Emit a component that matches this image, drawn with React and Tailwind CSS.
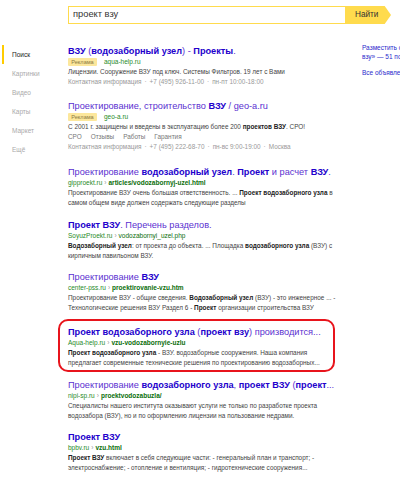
import React from 'react';

const B = ({ children }) => <b className="font-bold text-[#2200cc]">{children}</b>;
const S = ({ children }) => <b className="font-bold text-[#222]">{children}</b>;

function Title({ children }) {
    return (
        <div className="text-[9.2px] leading-[12px] text-[#5a30d0] whitespace-nowrap">
            {children}
        </div>
    );
}

function Url({ domain, path, bold = true }) {
    return (
        <div className="text-[6.5px] leading-[10px] whitespace-nowrap">
            <span className="text-[#1f8a1f]">{domain}</span>
            {path && <span className="text-[#999] px-[2px]">›</span>}
            {path && <span className={bold ? 'text-[#0a6e0a] font-bold' : 'text-[#0a6e0a]'}>{path}</span>}
        </div>
    );
}

function Snippet({ lines }) {
    return (
        <div className="text-[6.4px] leading-[10px] text-[#444]">
            {lines.map((l, i) => (
                <div key={i} className="whitespace-nowrap">{l}</div>
            ))}
        </div>
    );
}

function Ad({ domain }) {
    return (
        <div className="flex items-center h-[10px] gap-[7px] text-[6.5px]">
            <span className="h-[8px] w-[29px] flex items-center justify-center bg-[#fce79c] text-[#8b7a45] text-[5.6px] rounded-[1px]">Реклама</span>
            <span className="text-[#1f8a1f]">{domain}</span>
        </div>
    );
}

function Contact({ parts }) {
    return (
        <div className="text-[6.4px] leading-[10px] text-[#999] whitespace-nowrap">
            {parts.map((p, i) => (
                <span key={i}>
                    {i > 0 && <span className="px-[3px]">·</span>}
                    {p}
                </span>
            ))}
        </div>
    );
}

const nav = ['Поиск', 'Картинки', 'Видео', 'Карты', 'Маркет', 'Ещё'];

export default function App() {
    return (
        <div className="w-[400px] h-[478px] overflow-hidden bg-white font-['Liberation_Sans',Arial,sans-serif]">
            {/* search bar */}
            <div className="flex pt-[6px] pl-[68px]">
                <div className="w-[278px] h-[18px] border-[1.5px] border-[#ffdb4d] flex items-center pl-[4px] text-[9.3px] text-[#333]">
                    проект взу
                </div>
                <div className="w-[45px] h-[18px] bg-[#ffdb4d] [clip-path:polygon(0_0,86%_0,100%_50%,86%_100%,0_100%)] flex items-center pl-[9px] text-[8.2px] text-[#333]">
                    Найти
                </div>
            </div>

            <div className="flex mt-[21px]">
                {/* left nav */}
                <div className="w-[68px] shrink-0">
                    {nav.map((n, i) => (
                        <div key={n} className="flex items-center h-[19px]">
                            <div className={i === 0 ? 'w-[2px] h-[19px] bg-[#ffcc00] ml-[2px]' : 'w-[2px] ml-[2px]'} />
                            <span className={i === 0 ? 'ml-[8px] text-[6.5px] text-[#222]' : 'ml-[8px] text-[6.5px] text-[#aaa]'}>{n}</span>
                        </div>
                    ))}
                </div>

                {/* results */}
                <div className="w-[267px] shrink-0">
                    <div>
                        <Title><B>ВЗУ</B> (<B>водозаборный узел</B>) - <B>Проекты</B>.</Title>
                        <Ad domain="aqua-help.ru" />
                        <Snippet lines={['Лицензии. Сооружение ВЗУ под ключ. Системы Фильтров. 19 лет с Вами']} />
                        <Contact parts={['Контактная информация', '+7 (495) 926-11-00', 'пн-пт 10:00-18:00']} />
                    </div>

                    <div className="mt-[13px]">
                        <Title>Проектирование, строительство <B>ВЗУ</B> / geo-a.ru</Title>
                        <Ad domain="geo-a.ru" />
                        <Snippet lines={[<>С 2001 г. защищены и введены в эксплуатацию более 200 <S>проектов ВЗУ</S>. СРО!</>]} />
                        <div className="text-[6.4px] leading-[10px] text-[#777] flex gap-[9px]">
                            <span>СРО</span><span>Отзывы</span><span>Работы</span><span>Гарантия</span>
                        </div>
                        <Contact parts={['Контактная информация', '+7 (495) 222-68-70', 'пн-вс 9:00-19:00', 'Москва']} />
                    </div>

                    <div className="mt-[14px]">
                        <Title>Проектирование <B>водозаборный узел</B>. <B>Проект</B> и расчет <B>ВЗУ</B>.</Title>
                        <Url domain="gipproekt.ru" path="articles/vodozabornyj-uzel.html" />
                        <Snippet lines={[
                            <>Проектирование ВЗУ очень большая ответственность. ... <S>Проект водозаборного узла</S> в</>,
                            'самом общем виде должен содержать следующие разделы',
                        ]} />
                    </div>

                    <div className="mt-[11px]">
                        <Title><B>Проект ВЗУ</B>. Перечень разделов.</Title>
                        <Url domain="SoyuzProekt.ru" path="vodozabornyi_uzel.php" bold={false} />
                        <Snippet lines={[
                            <><S>Водозаборный узел</S>: от проекта до объекта. ... Площадка <S>водозаборного узла</S> (ВЗУ) с</>,
                            'кирпичным павильоном ВЗУ.',
                        ]} />
                    </div>

                    <div className="mt-[10px]">
                        <Title>Проектирование <B>ВЗУ</B></Title>
                        <Url domain="center-pss.ru" path="proektirovanie-vzu.htm" />
                        <Snippet lines={[
                            <>Проектирование ВЗУ - общие сведения. <S>Водозаборный узел</S> (ВЗУ) - это инженерное ... -</>,
                            <>Технологические решения ВЗУ Раздел 6 - <S>Проект</S> организации строительства ВЗУ</>,
                        ]} />
                    </div>

                    {/* highlighted result */}
                    <div className="mt-[6px] -ml-[10px] w-[277px] border-2 border-[#e8141c] rounded-[10px] pl-[8px] pt-[5px] pb-[2px]">
                        <Title><B>Проект водозаборного узла</B> (<B>проект взу</B>) производится...</Title>
                        <Url domain="Aqua-help.ru" path="vzu-vodozabornyie-uzlu" />
                        <Snippet lines={[
                            <><S>Проект водозаборного узла</S> - ВЗУ. водозаборные сооружения. Наша компания</>,
                            'предлагает современные технические решения по проектированию водозаборных...',
                        ]} />
                    </div>

                    <div className="mt-[7px]">
                        <Title>Проектирование <B>водозаборного узла</B>, <B>проект ВЗУ</B> (<B>проект</B>...</Title>
                        <Url domain="nipi-sp.ru" path="proektvodozabuzla/" />
                        <Snippet lines={[
                            'Специалисты нашего института оказывают услуги не только по разработке проекта',
                            'водозабора (ВЗУ), но и по оформлению лицензии на пользование недрами.',
                        ]} />
                    </div>

                    <div className="mt-[10px]">
                        <Title><B>Проект ВЗУ</B></Title>
                        <Url domain="bpbv.ru" path="vzu.html" />
                        <Snippet lines={[
                            <><S>Проект ВЗУ</S> включает в себя следующие части: - генеральный план и транспорт; -</>,
                            'электроснабжение; - отопление и вентиляция; - гидротехнические сооружения...',
                        ]} />
                    </div>
                </div>

                {/* right column */}
                <div className="ml-[27px] -mt-[2px] text-[6.5px] text-[#2a2acc] whitespace-nowrap">
                    <div className="leading-[9px]">Разместить объявление по запросу «проект</div>
                    <div className="leading-[9px]">взу» — 51 показ в месяц</div>
                    <div className="leading-[9px] mt-[7px]">Все объявления</div>
                </div>
            </div>
        </div>
    );
}
